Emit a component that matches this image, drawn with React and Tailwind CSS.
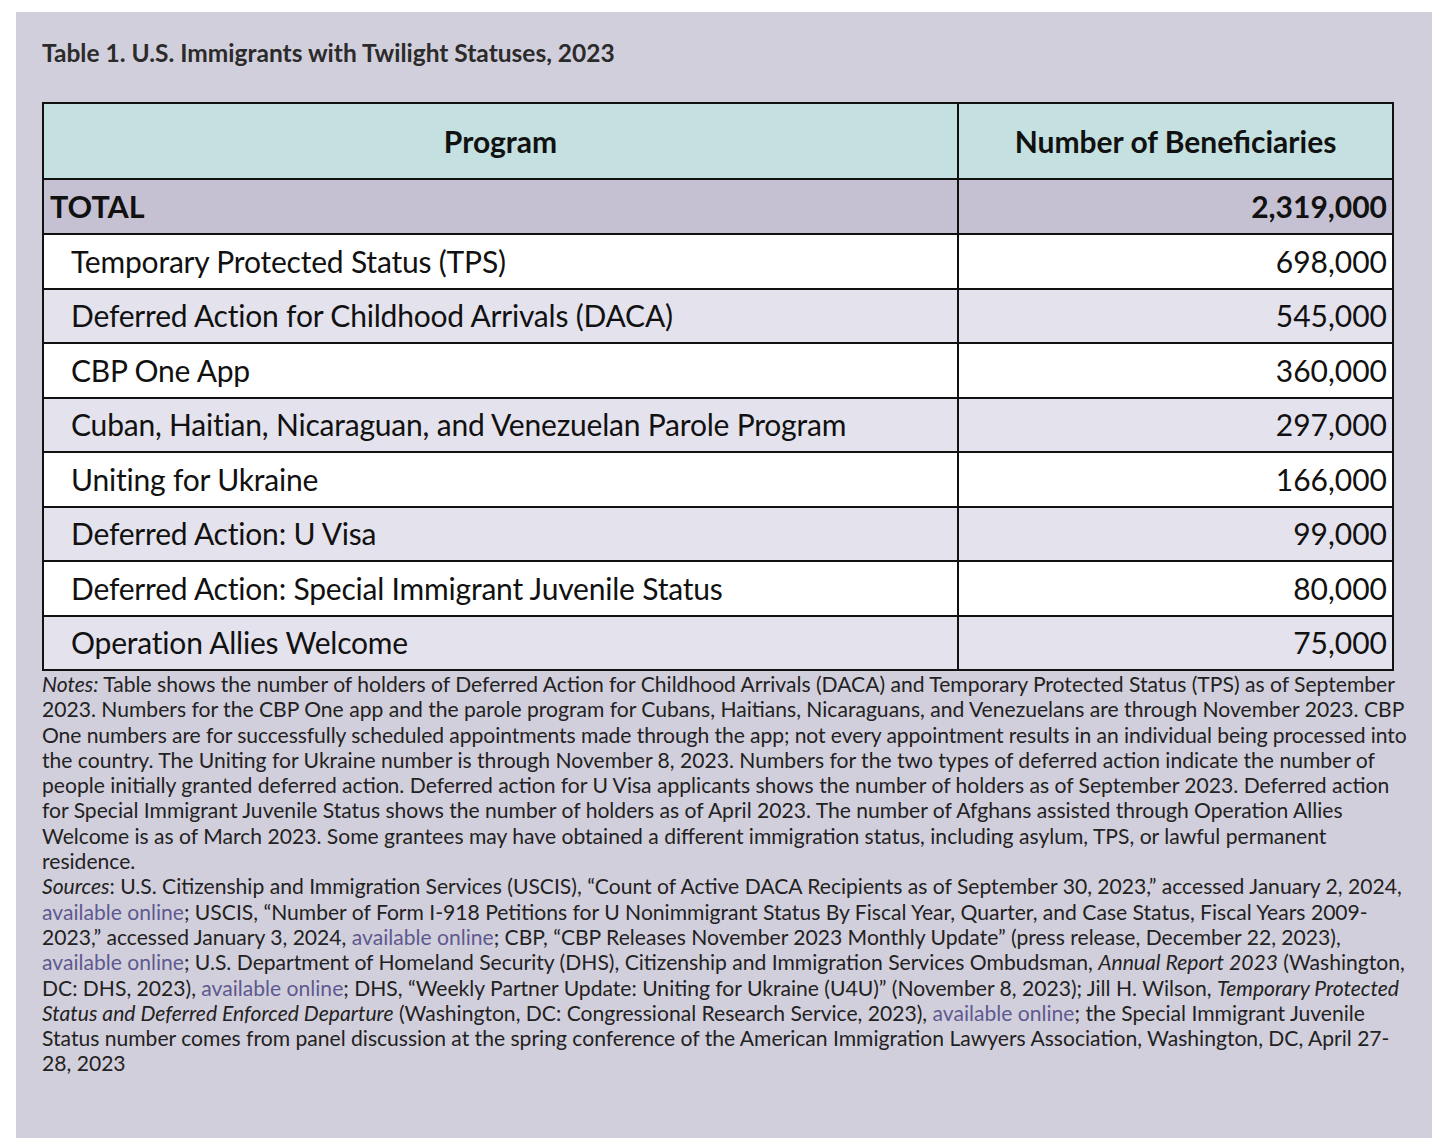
// Tabla 1 — inmigrantes con estatus "twilight", 2023

const ROWS = [
  { label: 'Temporary Protected Status (TPS)', value: '698,000' },
  { label: 'Deferred Action for Childhood Arrivals (DACA)', value: '545,000' },
  { label: 'CBP One App', value: '360,000' },
  { label: 'Cuban, Haitian, Nicaraguan, and Venezuelan Parole Program', value: '297,000' },
  { label: 'Uniting for Ukraine', value: '166,000' },
  { label: 'Deferred Action: U Visa', value: '99,000' },
  { label: 'Deferred Action: Special Immigrant Juvenile Status', value: '80,000' },
  { label: 'Operation Allies Welcome', value: '75,000' },
]

function Link({ children }) {
  return <span className="text-[#5d5990]">{children}</span>
}

// Cada línea de las notas va en su propio bloque para respetar los cortes del original
function Line({ children }) {
  return <span className="block whitespace-nowrap">{children}</span>
}

export default function App() {
  return (
    <div className="min-h-screen bg-white pt-[12px] px-[16px] font-['Lato',sans-serif]">
      <div className="w-[1416px] h-[1126px] bg-[#d2cfdc] px-[26px] pt-[26px]">
        <h1 className="text-[24.5px] leading-[29px] font-bold text-[#2b2b2b]">
          Table 1. U.S. Immigrants with Twilight Statuses, 2023
        </h1>

        <table className="mt-[35px] w-[1352px] border-collapse border-2 border-[#111] text-[#111] table-fixed">
          <colgroup>
            <col className="w-[915px]" />
            <col />
          </colgroup>
          <thead>
            <tr className="h-[76px] bg-[#c4e0e0]">
              <th className="border-2 border-[#111] text-[30px] font-bold text-center">Program</th>
              <th className="border-2 border-[#111] text-[30px] font-bold text-center">Number of Beneficiaries</th>
            </tr>
          </thead>
          <tbody>
            <tr className="h-[55px] bg-[#c5c1d2]">
              <td className="border-2 border-[#111] px-[6px] text-[30.5px] font-bold">TOTAL</td>
              <td className="border-2 border-[#111] px-[5px] text-[30px] font-bold text-right">2,319,000</td>
            </tr>
            {ROWS.map((row, i) => (
              <tr key={row.label} className={`h-[54.5px] ${i % 2 === 0 ? 'bg-white' : 'bg-[#e4e2ec]'}`}>
                <td className="border-2 border-[#111] pl-[27px] text-[30px] tracking-[-0.2px]">{row.label}</td>
                <td className="border-2 border-[#111] px-[5px] text-[30px] text-right">{row.value}</td>
              </tr>
            ))}
          </tbody>
        </table>

        <div className="text-[21.1px] leading-[25.3px] text-[#222]">
          <p>
            <Line><em>Notes:</em> Table shows the number of holders of Deferred Action for Childhood Arrivals (DACA) and Temporary Protected Status (TPS) as of September</Line>
            <Line>2023. Numbers for the CBP One app and the parole program for Cubans, Haitians, Nicaraguans, and Venezuelans are through November 2023. CBP</Line>
            <Line><span className="tracking-[-0.08px]">One numbers are for successfully scheduled appointments made through the app; not every appointment results in an individual being processed into</span></Line>
            <Line>the country. The Uniting for Ukraine number is through November 8, 2023. Numbers for the two types of deferred action indicate the number of</Line>
            <Line>people initially granted deferred action. Deferred action for U Visa applicants shows the number of holders as of September 2023. Deferred action</Line>
            <Line>for Special Immigrant Juvenile Status shows the number of holders as of April 2023. The number of Afghans assisted through Operation Allies</Line>
            <Line>Welcome is as of March 2023. Some grantees may have obtained a different immigration status, including asylum, TPS, or lawful permanent</Line>
            <Line>residence.</Line>
          </p>
          <p>
            <Line><em>Sources</em>: U.S. Citizenship and Immigration Services (USCIS), “Count of Active DACA Recipients as of September 30, 2023,” accessed January 2, 2024,</Line>
            <Line><Link>available online</Link>; USCIS, “Number of Form I-918 Petitions for U Nonimmigrant Status By Fiscal Year, Quarter, and Case Status, Fiscal Years 2009-</Line>
            <Line>2023,” accessed January 3, 2024, <Link>available online</Link>; CBP, “CBP Releases November 2023 Monthly Update” (press release, December 22, 2023),</Line>
            <Line><Link>available online</Link>; U.S. Department of Homeland Security (DHS), Citizenship and Immigration Services Ombudsman, <em>Annual Report 2023</em> (Washington,</Line>
            <Line>DC: DHS, 2023), <Link>available online</Link>; DHS, “Weekly Partner Update: Uniting for Ukraine (U4U)” (November 8, 2023); Jill H. Wilson, <em>Temporary Protected</em></Line>
            <Line><em>Status and Deferred Enforced Departure</em> (Washington, DC: Congressional Research Service, 2023), <Link>available online</Link>; the Special Immigrant Juvenile</Line>
            <Line>Status number comes from panel discussion at the spring conference of the American Immigration Lawyers Association, Washington, DC, April 27-</Line>
            <Line>28, 2023</Line>
          </p>
        </div>
      </div>
    </div>
  )
}
